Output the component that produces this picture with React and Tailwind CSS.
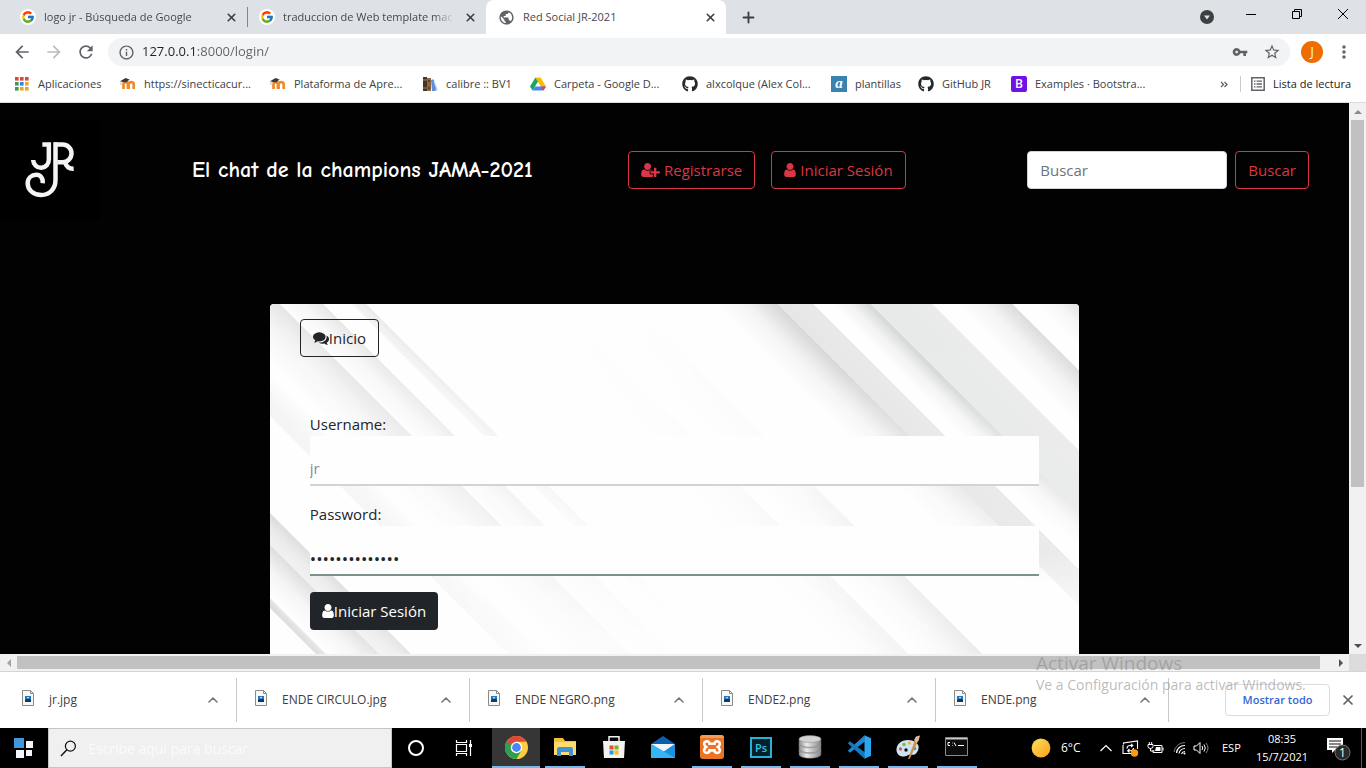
import React from "react";
import { FcGoogle } from "react-icons/fc";
import { FaGithub } from "react-icons/fa";
import { MdVpnKey, MdStarBorder, MdMoreVert, MdArrowBack, MdArrowForward, MdRefresh, MdInfoOutline, MdPublic } from "react-icons/md";
import { X, Plus, ChevronUp } from "lucide-react";

/* ---------- Browser chrome ---------- */

function Tab({ icon, title, className, active, separator }) {
  return (
    <div className={`flex h-full items-center gap-2 ${className}`}>
      {icon}
      <span className={`min-w-0 flex-1 overflow-hidden whitespace-nowrap ${active ? "" : "[mask-image:linear-gradient(90deg,#000_88%,transparent)]"}`}>{title}</span>
      <button type="button" aria-label={`Cerrar ${title}`} className="flex size-4 items-center justify-center text-[#3c4043]">
        <X size={13} strokeWidth={3} />
      </button>
      {separator ? <span className="h-5 w-px bg-[#80868b]" /> : null}
    </div>
  );
}

const googleIcon = (
  <span className="flex size-4 shrink-0 items-center justify-center rounded-full bg-white">
    <FcGoogle size={14} />
  </span>
);

function TabStrip() {
  return (
    <div className="flex h-[34px] shrink-0 items-center bg-[#dee1e6] text-[11px] text-[#45494d]">
      <Tab icon={googleIcon} title="logo jr - Búsqueda de Google" separator className="w-[248px] pl-5" />
      <Tab icon={googleIcon} title="traduccion de Web template mac" className="w-[238px] pr-2 pl-[11px]" />
      <Tab icon={<MdPublic size={17} className="shrink-0 text-[#5f6368]" />} title="Red Social JR-2021" active className="w-[240px] rounded-t-lg bg-white pr-2 pl-3" />
      <button type="button" aria-label="Nueva pestaña" className="ml-[13px] flex size-[18px] items-center justify-center text-[#3c4043]">
        <Plus size={17} strokeWidth={2.6} />
      </button>
      <div className="ml-auto flex h-full items-center">
        <button type="button" aria-label="Buscar pestañas" className="mr-[3px] w-[36px]">
          <svg viewBox="0 0 14 14" className="mx-auto size-[14px]">
            <circle cx="7" cy="7" r="7" fill="#3c4043" />
            <path d="M4 5.5h6L7 9.6z" fill="#dee1e6" />
          </svg>
        </button>
        <button type="button" aria-label="Minimizar" className="flex h-[28px] w-[46px] justify-center self-start">
          <svg viewBox="0 0 10 10" className="mt-[9px] size-[10px]"><path d="M0 5.5h10" stroke="#000" /></svg>
        </button>
        <button type="button" aria-label="Restaurar" className="flex h-[28px] w-[46px] justify-center self-start">
          <svg viewBox="0 0 10 10" className="mt-[9px] size-[10px]"><path d="M.5 2.5h7v7h-7zM2.5 2.5v-2h7v7h-2" fill="none" stroke="#000" /></svg>
        </button>
        <button type="button" aria-label="Cerrar" className="flex h-[28px] w-[46px] justify-center self-start">
          <svg viewBox="0 0 10 10" className="mt-[9px] size-[10px]"><path d="M0 0l10 10M10 0L0 10" stroke="#000" /></svg>
        </button>
      </div>
    </div>
  );
}

function AddressBar() {
  return (
    <div className="flex h-9 shrink-0 items-center bg-white text-[#5f6368]">
      <button type="button" aria-label="Atrás" className="ml-3"><MdArrowBack size={20} /></button>
      <button type="button" aria-label="Adelante" className="ml-3 text-[#babcbe]"><MdArrowForward size={20} /></button>
      <button type="button" aria-label="Recargar" className="ml-3"><MdRefresh size={20} /></button>
      <div className="ml-3 flex h-7 min-w-0 flex-1 items-center rounded-full bg-[#f1f3f4] pr-[9px] pl-[10px]">
        <MdInfoOutline size={17} className="shrink-0" />
        <input
          aria-label="Dirección"
          defaultValue="127.0.0.1:8000/login/"
          className="ml-[7px] min-w-0 flex-1 bg-[linear-gradient(90deg,#202124_54px,#5f6368_54px)] bg-clip-text text-[13px] text-transparent outline-none"
        />
        <MdVpnKey size={16} className="mr-[15px]" />
        <MdStarBorder size={18} />
      </div>
      <button type="button" aria-label="Perfil" className="ml-[11px] size-[22px] rounded-full bg-[#ef6c00] text-[12px] leading-none text-white">J</button>
      <button type="button" aria-label="Menú" className="mr-3 ml-[11px]"><MdMoreVert size={20} /></button>
    </div>
  );
}

const AppsIcon = () => (
  <svg viewBox="0 0 14 14" className="size-[14px]">
    {["#d9483b", "#d9483b", "#d9483b", "#3c9a56", "#3f7fe0", "#e8a92a", "#3c9a56", "#e8a92a", "#e8a92a"].map((c, i) => (
      <rect key={i} x={(i % 3) * 5} y={Math.floor(i / 3) * 5} width="3.6" height="3.6" fill={c} />
    ))}
  </svg>
);
const MoodleIcon = () => (
  <svg viewBox="0 0 16 16" className="size-4">
    <path d="M3.5 13V8.4q0-2.2 2.2-2.2t2.2 2.2V13M8.6 13V8.4q0-2.2 2.5-2.2t2.6 2.2V13" fill="none" stroke="#ef8b2c" strokeWidth="2.7" />
    <path d="M0 5.2L5.6 2l4 1.4-3.4 3-3.4-.4z" fill="#3d3a38" />
    <path d="M1 5v4" stroke="#b8a99a" strokeWidth=".8" />
  </svg>
);
const BooksIcon = () => (
  <svg viewBox="0 0 16 16" className="size-4">
    <path d="M1 1h4v14H1z" fill="#4a3524" /><path d="M5 2h4v13H5z" fill="#8a6a43" />
    <path d="M1 4h4M1 12h4" stroke="#b99a63" strokeWidth=".8" />
    <path d="M9 4l2.6-.8L15.4 14l-3 1H10z" fill="#5c8edc" /><path d="M12 5l3 9" stroke="#c4d9fa" strokeWidth="1.2" />
    <path d="M6 5h2M6 12h2" stroke="#2d2519" />
  </svg>
);
const DriveIcon = () => (
  <svg viewBox="0 0 16 14" className="h-[14px] w-4">
    <path d="M5.4.5h5.2L16 9.6h-5.3z" fill="#fbbc04" />
    <path d="M5.4.5L0 9.6l2.6 4 5.4-9z" fill="#1ea362" />
    <path d="M2.6 13.6h10.8l2.6-4H5z" fill="#4688f4" />
    <path d="M13.4 13.6l2.6-4h-5.3z" fill="#ea4335" />
  </svg>
);

const bookmarks = [
  { label: "Aplicaciones", icon: <AppsIcon />, w: "w-[106px]" },
  { label: "https://sinecticacur...", icon: <MoodleIcon />, w: "w-[150px]" },
  { label: "Plataforma de Apre...", icon: <MoodleIcon />, w: "w-[152px]" },
  { label: "calibre :: BV1", icon: <BooksIcon />, w: "w-[108px]" },
  { label: "Carpeta - Google D...", icon: <DriveIcon />, w: "w-[152px]" },
  { label: "alxcolque (Alex Col...", icon: <FaGithub size={16} className="text-[#24292e]" />, w: "w-[149px]" },
  { label: "plantillas", icon: <span className="size-4 bg-[#3a83ae] text-center font-['Liberation_Serif',serif] text-[15px] leading-[14px] font-bold text-white italic">a</span>, w: "w-[87px]" },
  { label: "GitHub JR", icon: <FaGithub size={16} className="text-[#24292e]" />, w: "w-[93px]" },
  { label: "Examples · Bootstra...", icon: <span className="flex size-4 items-center justify-center rounded-[2px] bg-[#7011e8] text-[12px] leading-none font-semibold text-white">B</span>, w: "w-[150px]" },
];

function BookmarksBar() {
  return (
    <nav className="flex h-[33px] shrink-0 items-center border-b border-[#dadce0] bg-white pb-1 text-[11px] text-[#3c4043]">
      <div className="flex min-w-0 flex-1 overflow-hidden pl-[14px]">
        {bookmarks.map((b) => (
          <a key={b.label} href="#" className={`flex shrink-0 items-center gap-2 whitespace-nowrap ${b.w}`}>
            <span className="flex w-4 shrink-0 justify-center">{b.icon}</span>
            {b.label}
          </a>
        ))}
      </div>
      <button type="button" aria-label="Más marcadores" className="mr-[8px] flex w-4 justify-center">
        <svg viewBox="0 0 8 6" className="h-[7px] w-2"><path d="M1 .5L3.5 3 1 5.5M4.500 .5L7 3 4.500 5.500" fill="none" stroke="#5f6368" strokeWidth="1.300" /></svg>
      </button>
      <span className="h-4 w-px bg-[#c9cbce]" />
      <button type="button" className="mr-[15px] ml-[10px] flex items-center gap-2 text-[#202124]">
        <svg viewBox="0 0 14 14" className="size-[14px]">
          <path d="M.8.8h12.400v12.400H.8z" fill="none" stroke="#5f6368" strokeWidth="1.500" />
          <path d="M3 4.200h1.500M5.500 4.200H11M3 7h1.500M5.500 7H11M3 9.800h1.500M5.500 9.800H11" stroke="#5f6368" strokeWidth="1.300" />
        </svg>
        Lista de lectura
      </button>
    </nav>
  );
}

/* ---------- Web page ---------- */

const UserIcon = ({ className }) => (
  <svg viewBox="256 128 1280 1536" fill="currentColor" className={className}>
    <path d="M1536 1399q0 109-62.5 187t-150.5 78h-854q-88 0-150.5-78t-62.5-187q0-85 8.5-160.5t31.5-152 58.5-131 94-89 134.5-34.5q131 128 313 128t313-128q76 0 134.5 34.5t94 89 58.5 131 31.5 152 8.5 160.5zm-256-887q0 159-112.5 271.5t-271.5 112.5-271.5-112.5-112.5-271.5 112.5-271.5 271.5-112.5 271.5 112.5 112.5 271.5z" />
  </svg>
);
const UserPlusIcon = ({ className }) => (
  <svg viewBox="0 128 2048 1536" fill="currentColor" className={className}>
    <path d="M704 896q-159 0-271.5-112.5t-112.5-271.5 112.5-271.5 271.5-112.5 271.5 112.5 112.5 271.5-112.5 271.5-271.5 112.5zm960 128h352q13 0 22.5 9.5t9.5 22.5v192q0 13-9.5 22.5t-22.5 9.5h-352v352q0 13-9.5 22.5t-22.5 9.5h-192q-13 0-22.5-9.5t-9.5-22.5v-352h-352q-13 0-22.5-9.5t-9.5-22.5v-192q0-13 9.5-22.5t22.5-9.5h352v-352q0-13 9.5-22.5t22.5-9.5h192q13 0 22.5 9.5t9.5 22.5v352zm-736 224q0 52 38 90t90 38h256v238q-68 50-171 50h-874q-121 0-194-69t-73-190q0-53 3.5-103.5t14-109 26.5-108.5 43-97.5 62-81 85.5-53.5 111.5-20q19 0 39 17 79 61 154.5 91.5t164.5 30.5 164.5-30.5 154.5-91.5q20-17 39-17 132 0 217 96h-223q-52 0-90 38t-38 90v192z" />
  </svg>
);
const CommentsIcon = ({ className }) => (
  <svg viewBox="0 128 1792 1536" fill="currentColor" className={className}>
    <path d="M1408 768q0 139-94 257t-256.5 186.5-353.5 68.5q-86 0-176-16-124 88-278 128-36 9-86 16h-3q-11 0-20.5-8t-11.5-21q-1-3-1-6.5t.5-6.5 2-6l2.5-5 3.5-5.5 4-5 4.5-5 4-4.500q5-6 23-25t26-29.500 22.500-29 25-38.500 20.500-44q-124-72-195-177t-71-224q0-139 94-257t256.500-186.500 353.500-68.500 353.500 68.500 256.500 186.500 94 257zm384 256q0 120-71 224.500t-195 176.500q10 24 20.500 44t25 38.500 22.500 29 26 29.500 23 25q1 1 4 4.500t4.500 5 4 5 3.500 5.500l2.500 5 2 6 .5 6.500-1 6.500q-3 14-13 22t-22 7q-50-7-86-16-154-40-278-128-90 16-176 16-271 0-472-132 58 4 88 4 161 0 309-45t264-129q125-92 192-212t67-254q0-77-23-152 129 71 204 178t75 230z" />
  </svg>
);

function Logo() {
  return (
    <svg viewBox="-30 -30 300 300" className="size-[100px] shrink-0 bg-[#000]">
      <g fill="none" stroke="#f4f4f4" strokeWidth="13.500">
        <path d="M97 43.500H116.500V88A23.500 24.500 0 0 1 69.500 90" />
        <path d="M132 43.500H158A26.500 26.500 0 0 1 158 96.500H142" />
        <path d="M136.500 37V150C136.500 178 117 195 94 195 70 195 53 180 53 160 53 144 65 134.500 79 134.500 91 134.500 100 144 98 160" />
        <path d="M165 97Q171 117 191 116" />
      </g>
    </svg>
  );
}

const outlineRed = "flex h-[38px] items-center rounded-sm border border-[#dc3545] px-3 text-[15px] text-[#dc3545] whitespace-nowrap";

function SiteHeader() {
  return (
    <header className="flex h-[100px] shrink-0 items-center">
      <Logo />
      <h1 className="ml-[92px] w-[436px] font-['Comic_Sans_MS','Comic_Neue','Open_Sans',sans-serif] text-[22px] font-bold whitespace-nowrap text-white">
        El chat de la champions JAMA-2021
      </h1>
      <nav className="flex gap-4">
        <a href="#" className={outlineRed}><UserPlusIcon className="mr-1 h-[14px] w-[19px]" />Registrarse</a>
        <a href="#" className={outlineRed}><UserIcon className="mr-1 h-[14px] w-[12px]" />Iniciar Sesión</a>
      </nav>
      <form className="mr-10 ml-auto flex gap-2" onSubmit={(e) => e.preventDefault()}>
        <input type="search" aria-label="Buscar" placeholder="Buscar" className="h-[38px] w-[200px] rounded-sm border border-[#ced4da] bg-white px-3 text-[15px] placeholder:text-[#6c757d]" />
        <button type="submit" className={outlineRed}>Buscar</button>
      </form>
    </header>
  );
}

/* Diagonal paper strips: [group, from, to, start opacity, end opacity], measured along the top edge */
const strips = [
  ["left", -60, 10, 0, 0.12],
  ["left", 12, 53, 0.01, 0.12],
  ["left", 82, 96, 0.06, 0.12],
  ["left", -112, -70, 0.05, 0],
  ["left", -241, -209, 0.06, 0.16],
  ["left", -291, -241, 0, 0.15],
  ["left", -304, -294, 0.16, 0.1],
  ["low", 225, 288, 0, 0.05],
  ["low", 300, 362, 0, 0.09],
  ["right", 445, 507, 0, 0.18],
  ["base", 507, 543, 0.11, 0.1],
  ["right", 560, 600, 0, 0.19],
  ["base", 600, 662, 0.1, 0.09],
  ["base", 686, 742, 0, 0.16],
  ["base", 765, 812, 0, 0.15],
];

function CardArtwork() {
  const h = 350;
  return (
    <svg viewBox="0 0 809 350" preserveAspectRatio="none" aria-hidden="true" className="absolute inset-x-0 top-0 h-[350px] w-full">
      <defs>
        {strips.map(([, a, b, o1, o2], i) => (
          <linearGradient key={i} id={`strip${i}`} gradientUnits="userSpaceOnUse" x1={a / 2} y1={-a / 2} x2={b / 2} y2={-b / 2}>
            <stop offset="0" stopColor="#25292c" stopOpacity={o1} />
            <stop offset="0.5" stopColor="#25292c" stopOpacity={o1 + (o2 - o1) * 0.28} />
            <stop offset="1" stopColor="#25292c" stopOpacity={o2} />
          </linearGradient>
        ))}
        <linearGradient id="fade-left"><stop offset="0" stopColor="#fff" /><stop offset=".15" stopColor="#c4c4c4" /><stop offset=".42" stopColor="#222" /><stop offset=".5" stopColor="#000" /></linearGradient>
        <linearGradient id="fade-right" x2="0" y2="1"><stop offset=".2" stopColor="#fff" /><stop offset=".7" stopColor="#444" /><stop offset=".8" stopColor="#000" /></linearGradient>
        <linearGradient id="fade-low" x2="0" y2="1"><stop offset="0" stopColor="#000" /><stop offset=".4" stopColor="#2a2a2a" /><stop offset=".7" stopColor="#b0b0b0" /><stop offset="1" stopColor="#fff" /></linearGradient>
        <linearGradient id="fade-base" x2="0" y2="1"><stop offset="0" stopColor="#fff" /><stop offset=".7" stopColor="#e4e4e4" /><stop offset=".92" stopColor="#000" /></linearGradient>
        {["left", "right", "low", "base"].map((g) => (
          <mask key={g} id={`mask-${g}`} maskUnits="userSpaceOnUse" x="0" y="0" width="809" height={h}>
            <rect width="809" height={h} fill={`url(#fade-${g})`} />
          </mask>
        ))}
      </defs>
      <rect width="809" height={h} fill="#fefefe" />
      {["left", "right", "low", "base"].map((g) => (
        <g key={g} mask={`url(#mask-${g})`}>
          {strips.map(([group, a, b], i) =>
            group === g ? <path key={i} d={`M${a} 0H${b}L${b + h} ${h}H${a + h}z`} fill={`url(#strip${i})`} /> : null
          )}
        </g>
      ))}
    </svg>
  );
}

function LoginCard() {
  const field = "block h-[50px] w-full border-b-2 bg-[#fefefe] pt-4 outline-none";
  return (
    <section className="relative mx-auto mt-[84px] min-h-[400px] w-[60%] shrink-0 overflow-hidden rounded-sm bg-[#fefefe] pt-[15px] text-[15px] text-[#212529]">
      <CardArtwork />
      <div className="relative">
        <a href="#" className="ml-[30px] inline-flex h-[38px] items-center rounded-sm border border-[#212529] px-3">
          <CommentsIcon className="h-[14px] w-4" />Inicio
        </a>
        <form className="mt-[55px] px-10" onSubmit={(e) => e.preventDefault()}>
          <label htmlFor="username" className="block leading-6">Username:</label>
          <input id="username" defaultValue="jr" className={`${field} border-[#d1d3d8] text-[15px] text-[#868b90]`} />
          <label htmlFor="password" className="mt-4 block leading-6">Password:</label>
          <input id="password" type="password" defaultValue="abcdefghijklmn" className={`${field} border-[#7b938d] text-[17px]`} />
          <button type="submit" className="mt-4 flex h-[38px] items-center rounded-sm bg-[#212529] px-3 text-white">
            <UserIcon className="h-[14px] w-3" />Iniciar Sesión
          </button>
        </form>
      </div>
    </section>
  );
}

const Arrow = ({ d, fill = "#505050" }) => (
  <svg viewBox="0 0 8 8" className="size-2"><path d={d} fill={fill} /></svg>
);

/* ---------- Download shelf ---------- */

const downloads = ["jr.jpg", "ENDE CIRCULO.jpg", "ENDE NEGRO.png", "ENDE2.png", "ENDE.png"];

function DownloadShelf() {
  return (
    <div className="flex h-[57px] shrink-0 items-center border-t border-[#d5d5d5] bg-white text-[12px] text-[#3c4043]">
      {downloads.map((name, i) => (
        <div key={name} className={`flex h-11 items-center border-r border-[#c8c8c8] pr-[15px] ${i === 0 ? "w-[237px] pl-[22px]" : "w-[233px] pl-[18px]"}`}>
          <svg viewBox="0 0 12 16" className="mb-1 h-4 w-3">
            <path d="M.5.5h8l3 3v12H.5z" fill="#f7f7f7" stroke="#8b8b8b" />
            <path d="M8.500.5v3h3" fill="none" stroke="#8b8b8b" />
            <path d="M3 6h6v6H3z" fill="#2476c3" /><path d="M3 10l3-2 3 1.500V12H3z" fill="#0d3a6b" /><path d="M5 7h2v1.500H5z" fill="#a9dcf7" />
          </svg>
          <a href="#" className="ml-[15px] flex-1 whitespace-nowrap">{name}</a>
          <button type="button" aria-label={`Opciones de ${name}`} className="text-[#777]"><ChevronUp size={16} strokeWidth={2.4} /></button>
        </div>
      ))}
      <button type="button" className="mr-[10px] ml-auto h-8 w-[105px] rounded-sm border border-[#dadce0] text-[11px] font-semibold text-[#3367d6]">Mostrar todo</button>
      <button type="button" aria-label="Cerrar barra" className="mr-[10px] text-[#5f6368]"><X size={16} strokeWidth={2.6} /></button>
    </div>
  );
}

/* ---------- Windows taskbar ---------- */

const ChromeIcon = () => (
  <svg viewBox="0 0 24 24" className="size-[23px]">
    <circle cx="12" cy="12" r="12" fill="#ffcd41" />
    <path d="M12 12L1.600 6A12 12 0 0 0 12 24l5.200-9z" fill="#2aa14e" />
    <path d="M1.600 6A12 12 0 0 1 22.400 6H12L6.800 15z" fill="#e0483a" />
    <path d="M1.600 6L6.800 15 12 12z" fill="#2aa14e" />
    <circle cx="12" cy="12" r="6" fill="#fff" /><circle cx="12" cy="12" r="4.600" fill="#4688f1" />
  </svg>
);
const FolderIcon = () => (
  <svg viewBox="0 0 24 22" className="h-[22px] w-6">
    <path d="M1 2h9l2 3h11v14H1z" fill="#f3bf3a" /><path d="M1 6h22v13H1z" fill="#ffdb6e" />
    <path d="M4 20v-7q0-2 2-2h12q2 0 2 2v7h-4v-4H8v4z" fill="#3d95d6" />
  </svg>
);
const StoreIcon = () => (
  <svg viewBox="0 0 24 24" className="size-6">
    <path d="M7 7V1.800h10V7" fill="none" stroke="#f2f2f2" strokeWidth="1.500" /><path d="M1 6h22l-1 17H2z" fill="#f2f2f2" />
    <path d="M7.500 10.500h4v4h-4z" fill="#e5502b" /><path d="M12.500 10.500h4v4h-4z" fill="#7cb518" />
    <path d="M7.500 15.500h4v4h-4z" fill="#1b9fe4" /><path d="M12.500 15.500h4v4h-4z" fill="#f8b912" />
  </svg>
);
const MailIcon = () => (
  <svg viewBox="0 0 24 24" className="size-6">
    <path d="M0 9L12 1l12 8v14H0z" fill="#0b60ad" /><path d="M0 9h24L12 18z" fill="#f1f6fa" />
    <path d="M0 9v14h24z" fill="#2fa5e9" /><path d="M24 9L9 19l5 4h10z" fill="#1e8fdb" /><path d="M0 9l24 14H0z" fill="#35b5f2" />
  </svg>
);
const XamppIcon = () => (
  <svg viewBox="0 0 24 24" className="size-6">
    <rect width="24" height="24" rx="3" fill="#ea7324" /><path d="M0 3q0-3 3-3h18q3 0 3 3z" fill="#f59b5a" />
    <path d="M9.500 8.800q-.2-2.600-2.600-2.600-3.100.4-2.700 3 .3 1.600 2 2.800-1.700 1.200-2 2.800-.4 2.800 2.700 3.200 2.400 0 2.600-2.600h5q.2 2.600 2.600 2.600 3.100-.4 2.700-3.200-.3-1.600-2-2.800 1.700-1.200 2-2.800.4-2.600-2.700-3-2.400 0-2.600 2.600z" fill="none" stroke="#fff" strokeWidth="2.600" />
  </svg>
);
const PsIcon = () => (
  <span className="flex h-[21px] w-[22px] items-center justify-center border-2 border-[#24b3d6] bg-[#06202b] text-[11px] leading-none font-semibold text-[#2ec6e8]">Ps</span>
);
const DbIcon = () => (
  <svg viewBox="0 0 24 24" className="size-6">
    <defs><linearGradient id="metal"><stop stopColor="#8d8d8d" /><stop offset=".35" stopColor="#ececec" /><stop offset="1" stopColor="#858585" /></linearGradient></defs>
    {[15, 9.500, 4].map((y) => (
      <g key={y}><path d={`M1 ${y}v4.500a11 3.800 0 0 0 22 0V${y}z`} fill="url(#metal)" stroke="#666" strokeWidth=".5" /><ellipse cx="12" cy={y} rx="11" ry="3.400" fill="#d3d3d3" stroke="#888" strokeWidth=".5" /></g>
    ))}
  </svg>
);
const CodeIcon = () => (
  <svg viewBox="0 0 24 24" className="size-6">
    <path d="M17.500.3L.8 15.800l2.100 2L18 6.500z" fill="#1f86cf" /><path d="M17.500 23.700L.8 8.200l2.100-2L18 17.500z" fill="#1378bd" />
    <path d="M17.500.3L24 3.200v17.600l-6.500 2.900z" fill="#2aa7f0" />
  </svg>
);
const PaintIcon = () => (
  <svg viewBox="0 0 24 24" className="size-6">
    <path d="M12 5C5 5 1 9 .5 14c-.3 4 2 7 6 7.500 4 .6 5.500-2 8-2s3.500 1 5.500-1 3-5 2.500-7.500S18 5 12 5z" fill="#cfe4f3" />
    <circle cx="4.500" cy="14" r="1.700" fill="#dc5a4b" /><circle cx="8" cy="9.500" r="1.700" fill="#78b843" /><circle cx="13.500" cy="8" r="1.600" fill="#e8b23a" /><circle cx="10" cy="15" r="1.700" fill="#111" /><circle cx="18.500" cy="13.500" r="1.800" fill="#4192d9" />
    <path d="M19 5L12 24l1.800-.2L21.500 7z" fill="#d58f45" /><path d="M18 5l2-3.500L24 .5 22.500 6l-2 2z" fill="#e2bd93" />
  </svg>
);
const TerminalIcon = () => (
  <svg viewBox="0 0 24 20" className="h-5 w-6">
    <path d="M.5.5h22v18H.5z" fill="#0c0c0c" stroke="#8b8b8b" /><path d="M1 1h21v1.500H1z" fill="#c8c8c8" />
    <path d="M3 5.500h2M3 5.500v3M3 8.500h2M7 6h.5M7 8.500h.5M9 5.500l2 3.500M13 8.500h6" stroke="#fff" fill="none" />
  </svg>
);

const apps = [
  { name: "Google Chrome", icon: <ChromeIcon />, button: "bg-[#363636]", line: "w-12 border-[#76b9ed]" },
  { name: "Explorador de archivos", icon: <FolderIcon />, line: "w-10 border-[#76b9ed]" },
  { name: "Microsoft Store", icon: <StoreIcon />, line: "w-10 border-transparent" },
  { name: "Correo", icon: <MailIcon />, line: "w-10 border-transparent" },
  { name: "XAMPP", icon: <XamppIcon />, line: "w-10 border-[#76b9ed]" },
  { name: "Photoshop", icon: <PsIcon />, line: "w-10 border-[#76b9ed]" },
  { name: "Base de datos", icon: <DbIcon />, line: "w-10 border-[#76b9ed]" },
  { name: "Visual Studio Code", icon: <CodeIcon />, line: "w-10 border-[#76b9ed]" },
  { name: "Paint", icon: <PaintIcon />, line: "w-10 border-[#76b9ed]" },
  { name: "Símbolo del sistema", icon: <TerminalIcon />, line: "w-10 border-[#76b9ed]" },
];

function Taskbar() {
  return (
    <footer className="flex h-10 shrink-0 items-center bg-black text-[11px] text-white">
      <button type="button" aria-label="Inicio" className="flex h-full w-12 items-center justify-center">
        <svg viewBox="0 0 20 20" className="size-5">
          <path d="M0 0h10v10H0z" fill="#3f97dd" /><path d="M12 3h7v7h-7zM2 12h8v8H2zM12 12h6v6h-6z" fill="#f3f5f8" />
        </svg>
      </button>
      <div className="flex h-full w-[344px] items-center border border-[#c4c4c4] bg-[#f0f0f0] pl-[11px]">
        <svg viewBox="0 0 18 18" className="size-[17px]"><circle cx="11" cy="6.500" r="5.300" fill="none" stroke="#111" strokeWidth="1.300" /><path d="M7.300 10.300L1 17" stroke="#111" strokeWidth="1.500" /></svg>
        <input aria-label="Buscar en Windows" placeholder="Escribe aquí para buscar" className="ml-[11px] min-w-0 flex-1 text-[14px] outline-none placeholder:text-[#fbfbfb]" />
      </div>
      <button type="button" aria-label="Cortana" className="flex w-12 justify-center">
        <span className="size-4 rounded-full border-2 border-white" />
      </button>
      <button type="button" aria-label="Vista de tareas" className="flex w-12 justify-center">
        <svg viewBox="0 0 18 16" className="h-4 w-[18px]"><path d="M1.500 0v2.500h10V0M1.500 16v-2.500h10V16M1.500 4.500h10v7h-10zM15.500 0v16" fill="none" stroke="#fff" strokeWidth="1.200" /><path d="M14 4h3v3h-3z" fill="#fff" /></svg>
      </button>
      <div className="ml-1 flex h-full gap-px">
        {apps.map((a) => (
          <button key={a.name} type="button" aria-label={a.name} className={`flex w-12 justify-center ${a.button || ""}`}>
            <span className={`flex h-full items-center justify-center border-b-2 ${a.line}`}>{a.icon}</span>
          </button>
        ))}
      </div>
      <div className="ml-auto flex h-full items-center">
        <svg viewBox="0 0 20 20" className="size-5"><defs><linearGradient id="sun" x2="1" y2="1"><stop stopColor="#ffdf5e" /><stop offset="1" stopColor="#fb9f1a" /></linearGradient></defs><circle cx="10" cy="10" r="9.400" fill="url(#sun)" /></svg>
        <span className="ml-[10px] w-[38px] text-[12px]">6°C</span>
        <svg viewBox="0 0 14 8" className="h-2 w-[14px]"><path d="M1.500 7L7 1.500 12.500 7" fill="none" stroke="#fff" strokeWidth="1.200" /></svg>
        <svg viewBox="0 0 17 17" className="ml-[9px] size-[17px]">
          <path d="M3.500 13.500H1V5M1.500 4.500V3L15.500 1v8M1 13.500h8" fill="none" stroke="#fff" strokeWidth="1.100" />
          <path d="M5 8.500Q5 5.500 8 5.500h2.500M9 3.800l1.800 1.700L9 7.200M11.500 8Q11.500 10.800 8.500 10.800H6M7.500 9L5.700 10.800l1.800 1.700" fill="none" stroke="#fff" strokeWidth="1.100" />
          <circle cx="12.500" cy="13" r="3.700" fill="#ff9a0e" />
        </svg>
        <svg viewBox="0 0 17 14" className="ml-[8px] h-[14px] w-[17px]">
          <path d="M1 3.500h5v2q0 2-2.500 2T1 5.500zM2.300 1v3M4.700 1v3M3.500 7.500V10h4" fill="none" stroke="#fff" /><path d="M7 4.500h8v7H6V9" fill="none" stroke="#fff" /><path d="M9 6h4.500v4H8z" fill="#fff" /><path d="M15.500 6.500h1v3h-1z" fill="#fff" />
        </svg>
        <svg viewBox="0 0 14 14" className="ml-[9px] size-[14px]"><path d="M1 11A11 11 0 0 1 12 1.500" fill="none" stroke="#777" /><path d="M3.500 12A8 8 0 0 1 12 4.500M6 12.500A6 6 0 0 1 12 7.500M8.500 13A4 4 0 0 1 12 10.500" fill="none" stroke="#fff" strokeWidth="1.200" /><circle cx="11.500" cy="12.500" r="1" fill="#fff" /></svg>
        <svg viewBox="0 0 17 14" className="ml-[6px] h-[14px] w-[17px]"><path d="M1 5h2.500L7 1.500v11L3.500 9H1z" fill="none" stroke="#fff" /><path d="M9 5q1.500 2 0 4M11 3.500q2.600 3.500 0 7" fill="none" stroke="#fff" /><path d="M13 2q4 5 0 10" fill="none" stroke="#888" /></svg>
        <span className="ml-3 w-[28px]">ESP</span>
        <time className="flex w-[64px] flex-col items-center text-[11px] leading-[18px]"><span>08:35</span><span>15/7/2021</span></time>
        <button type="button" aria-label="Notificaciones" className="mr-[9px] ml-[12px]">
          <svg viewBox="0 0 26 26" className="size-[26px]">
            <path d="M1 3h16v12H9l-3 3v-3H1z" fill="#fff" /><path d="M3 6h12M3 9h12M3 12h8" stroke="#111" strokeWidth="1.200" />
            <circle cx="16.500" cy="17.500" r="7.500" fill="#2a2a2a" stroke="#777" /><text x="16.500" y="22" fontSize="12" textAnchor="middle" fill="#fff">1</text>
          </svg>
        </button>
        <span className="mr-1 h-full w-px bg-[#555]" />
      </div>
    </footer>
  );
}

export default function App() {
  return (
    <div className="relative flex h-screen flex-col overflow-hidden bg-white font-['Open_Sans','Noto_Sans',sans-serif]">
      <TabStrip />
      <AddressBar />
      <BookmarksBar />
      <div className="flex min-h-0 flex-1">
        <main className="flex min-w-0 flex-1 flex-col overflow-hidden bg-[#020202] pt-[17px]">
          <SiteHeader />
          <LoginCard />
        </main>
        <div className="flex w-[17px] shrink-0 flex-col items-center justify-between bg-[#f1f1f1]">
          <span className="flex h-[17px] items-center"><Arrow d="M0 6l4-4 4 4z" fill="#8b8b8b" /></span>
          <div className="w-[13px] flex-1"><div className="h-[71%] bg-[#c1c1c1]" /></div>
          <span className="flex h-[17px] items-center"><Arrow d="M0 2l4 4 4-4z" /></span>
        </div>
      </div>
      <div className="flex h-[17px] shrink-0 bg-[#dcdcdc]">
        <div className="flex flex-1 items-center bg-[#f1f1f1]">
          <span className="flex w-[17px] justify-center"><Arrow d="M6 0L2 4l4 4z" fill="#a3a3a3" /></span>
          <div className="h-[13px] flex-1 pr-3"><div className="h-full bg-[#c1c1c1]" /></div>
          <span className="flex w-[17px] justify-center"><Arrow d="M2 0l4 4-4 4z" /></span>
        </div>
        <div className="w-[17px]" />
      </div>
      <DownloadShelf />
      <Taskbar />
      <div className="pointer-events-none absolute right-[54px] bottom-[73px] w-[276px] whitespace-nowrap text-[#8e8e8e]/60">
        <p className="text-[19px] leading-6">Activar Windows</p>
        <p className="text-[14px] leading-5">Ve a Configuración para activar Windows.</p>
      </div>
    </div>
  );
}
